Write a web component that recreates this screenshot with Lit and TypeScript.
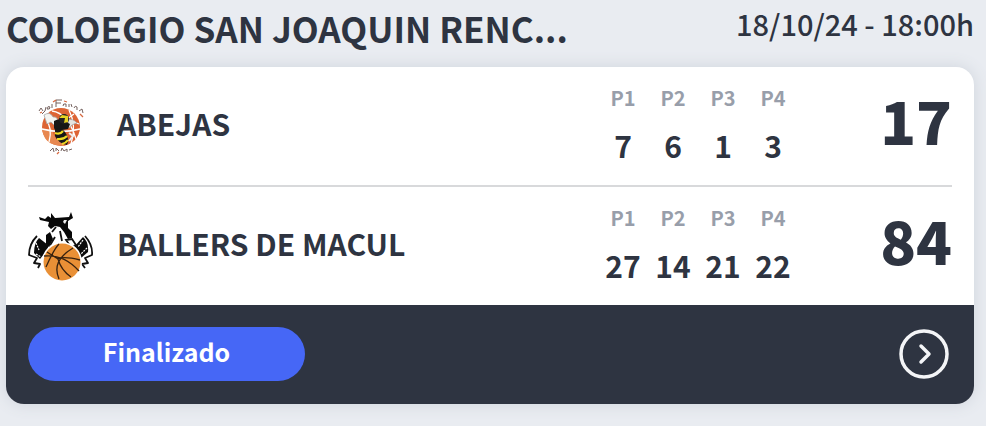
import { LitElement, html, css, svg } from "lit";
import { customElement, property } from "lit/decorators.js";

const beesLogo = svg`
  <svg viewBox="0 0 66 72" aria-hidden="true">
    <circle cx="33" cy="37" r="19" fill="#dd6434"/>
    <path d="M14 39 Q16 53 28 55 L38 56 Q25 49 24 39Z" fill="#e88850"/>
    <g fill="none" stroke="#fff" stroke-width="1.3">
      <path d="M14 39 Q33 44 52 39M41 20 Q49 36 43 54M24 21 Q40 23 48 49M46 24 L39 29 L51 34"/>
      <path d="M17 27 Q25 38 21 52"/>
    </g>
    <path d="M16 25 Q22 21 25 27 Q30 26 31 34 L27 36 L23 32 L19 34Z" fill="#f4f4f0" stroke="#aaa" stroke-width=".8"/>
    <path d="M40 30 Q45 28 49 33 Q44 34 41 38Z" fill="#e5e5e0" stroke="#999" stroke-width=".7"/>
    <path d="M26 31 Q31 28 34 30 L42 34 L40 39 L34 40 L29 44 L26 38Z" fill="#171717"/>
    <ellipse cx="36" cy="29" rx="5" ry="5" fill="#222"/>
    <path d="M31 28 L34 25 L40 26 L40 32 L36 33 L37 28Z" fill="#e5d324"/>
    <path d="M27 39 Q33 37 37 42 Q42 49 39 55 Q30 53 27 46Z" fill="#171717"/>
    <path d="M27 43 Q32 45 35 41M29 49 Q35 50 39 46M34 54 Q38 53 40 50" fill="none" stroke="#edda22" stroke-width="2.2"/>
    <path d="M41 43 L45 46 L41 51" fill="none" stroke="#eee" stroke-width="2"/>
    <g fill="none" stroke="#75625f" stroke-width="1">
      <path d="M11 21 L13 18 L15 21M14 24 L17 21 L18 17M19 19 Q20 15 22 17 Q22 20 19 19M24 18 L24 14M28 17 L28 10 L34 10M28 13 L33 13M35 16 Q35 13 38 14 L38 17M41 17 L41 14 M43 14 L44 17M46 18 Q47 15 49 17 L49 20M51 21 L54 19 L55 23"/>
      <path d="M22 61 L25 58 L26 62M28 61 L28 58 L31 61M33 61 L34 58 L36 61 L39 59 L39 62M41 60 L44 59"/>
    </g>
    <path d="M12 23l2-1M25 12l3-2M36 11l3 1M52 24l3 3M29 64l2-2" stroke="#d76940" stroke-width="1.3"/>
  </svg>`;

const ballersLogo = svg`
  <svg viewBox="0 0 66 72" aria-hidden="true">
    <path d="M11 7 L17 9 L20 6 L23 8 L23 3 L27 8 L41 7 L43 2 L45 8 L40 11 L40 18 L44 22 L44 28 L40 29 L36 22 L32 17 L27 16 L23 19 L20 16 L21 12 L12 10Z" fill="#080808"/>
    <path d="M18 25 L22 22 L25 29 L21 37 L18 34Z" fill="#080808"/>
    <path d="M25 19 L31 17 L36 28 L43 33 L41 38 L25 37 L22 34 L26 29Z" fill="#fff"/>
    <path d="M24 22 L28 17M27 27 L21 37M32 21 L34 31M38 30 L44 29 L48 35 L43 37Z" fill="none" stroke="#111" stroke-width="1.8"/>
    <path d="M36 10 L39 10 L37 14 L35 12Z" fill="#eee"/>
    <path d="M11 28 L20 35 L20 39 L12 49 L6 43 Q6 33 11 28Z" fill="#0b0b0b"/>
    <path d="M55 27 L46 37 L53 48 L60 42 Q61 32 55 27Z" fill="#0b0b0b"/>
    <path d="M9 26 Q1 34 1 45 L9 48 L6 53 L12 54 L10 58M57 26 Q65 35 64 45 L57 48 L60 53 L54 54 L57 58" fill="none" stroke="#111" stroke-width="1.8" stroke-linejoin="round"/>
    <path d="M8 33 L11 40M8 44 L13 47M55 30 L50 37M59 38 L53 44" stroke="#fff" stroke-width="1.2" stroke-dasharray="2 1"/>
    <circle cx="34" cy="52" r="20" fill="#fff"/>
    <circle cx="34" cy="52" r="18.500" fill="#e99036"/>
    <g fill="none" stroke="#38220f" stroke-width="1.3">
      <path d="M16 46 Q36 44 51 61M31 34 Q26 39 18 57M31 69 Q23 51 45 38M52 50 Q36 46 29 49M19 42 L30 49 Q33 60 43 67"/>
    </g>
  </svg>`;

interface Team { name: string; logo: unknown; periods: number[]; score: number; }

@customElement("team-row")
export class TeamRow extends LitElement {
  @property({ attribute: false }) team!: Team;
  static styles = css`
    :host { display: flex; align-items: center; height: 118px; }
    .logo { width: 66px; height: 72px; flex: none; }
    .logo svg { display: block; width: 100%; height: 100%; }
    .name { flex: 1; margin: 0; padding: 0 0 6px 23px; font-size: 30px; line-height: 40px; font-weight: 700; }
    table { border-collapse: collapse; table-layout: fixed; width: 200px; margin-bottom: 10px; text-align: center; font-weight: 700; }
    th, td { padding: 0; }
    th { font-size: 20px; line-height: 48px; color: #989eaa; }
    td { font-size: 30px; line-height: 46px; }
    .score { width: 154px; padding-bottom: 12px; text-align: right; font-size: 59px; line-height: 72px; font-weight: 900; }
  `;
  render() {
    const t = this.team;
    return html`
      <div class="logo">${t.logo}</div>
      <h2 class="name">${t.name}</h2>
      <table aria-label="Puntos por periodo">
        <thead><tr>${t.periods.map((_, i) => html`<th scope="col">P${i + 1}</th>`)}</tr></thead>
        <tbody><tr>${t.periods.map((p) => html`<td>${p}</td>`)}</tr></tbody>
      </table>
      <div class="score">${t.score}</div>`;
  }
}

@customElement("app-root")
export class AppRoot extends LitElement {
  private teams: Team[] = [
    { name: "ABEJAS", logo: beesLogo, periods: [7, 6, 1, 3], score: 17 },
    { name: "BALLERS DE MACUL", logo: ballersLogo, periods: [27, 14, 21, 22], score: 84 },
  ];
  static styles = css`
    :host { display: block; box-sizing: border-box; min-height: 100vh; padding: 0 12px 22px 6px;
      background: #e9ecf1; color: #2e3441; font-family: "Noto Sans CJK JP", "Noto Sans", sans-serif; }
    header { display: flex; justify-content: space-between; align-items: center; height: 67px; white-space: nowrap; }
    h1 { margin: 0; padding-bottom: 12px; font-size: 35px; line-height: 55px; font-weight: 700; }
    time { font-size: 29px; line-height: 45px; padding-bottom: 20px; font-weight: 500; }
    .card { border-radius: 18px; background: #fff; box-shadow: 0 0 16px #cfd4dc; overflow: hidden; }
    .teams { padding: 0 22px; }
    .second { border-top: 2px solid #d8d9db; }
    footer { box-sizing: border-box; display: flex; align-items: center; justify-content: space-between; height: 99px; padding: 0 25px 2px 22px; background: #2e3441; }
    .status { box-sizing: border-box; width: 277px; height: 54px; padding-bottom: 6px; line-height: 48px; border-radius: 27px; background: #4667f6; color: #fff;
      text-align: center; font-size: 25px; font-weight: 700; }
    button { width: 50px; height: 50px; padding: 0; border: 0; background: none; color: #f4f5f7; cursor: pointer; }
    button svg { display: block; }
  `;
  render() {
    return html`
      <header><h1>COLOEGIO SAN JOAQUIN RENC...</h1><time datetime="2024-10-18T18:00">18/10/24 - 18:00h</time></header>
      <article class="card">
        <div class="teams">
          <team-row .team=${this.teams[0]}></team-row>
          <team-row class="second" .team=${this.teams[1]}></team-row>
        </div>
        <footer>
          <div class="status">Finalizado</div>
          <button aria-label="Ver partido">
            <svg width="50" height="50" viewBox="0 0 50 50" fill="none" stroke="currentColor">
              <circle cx="25" cy="25" r="23" stroke-width="3.500"/>
              <path d="M22 17 L30 25 L22 33" stroke-width="3.500" stroke-linecap="round" stroke-linejoin="round"/>
            </svg>
          </button>
        </footer>
      </article>`;
  }
}
